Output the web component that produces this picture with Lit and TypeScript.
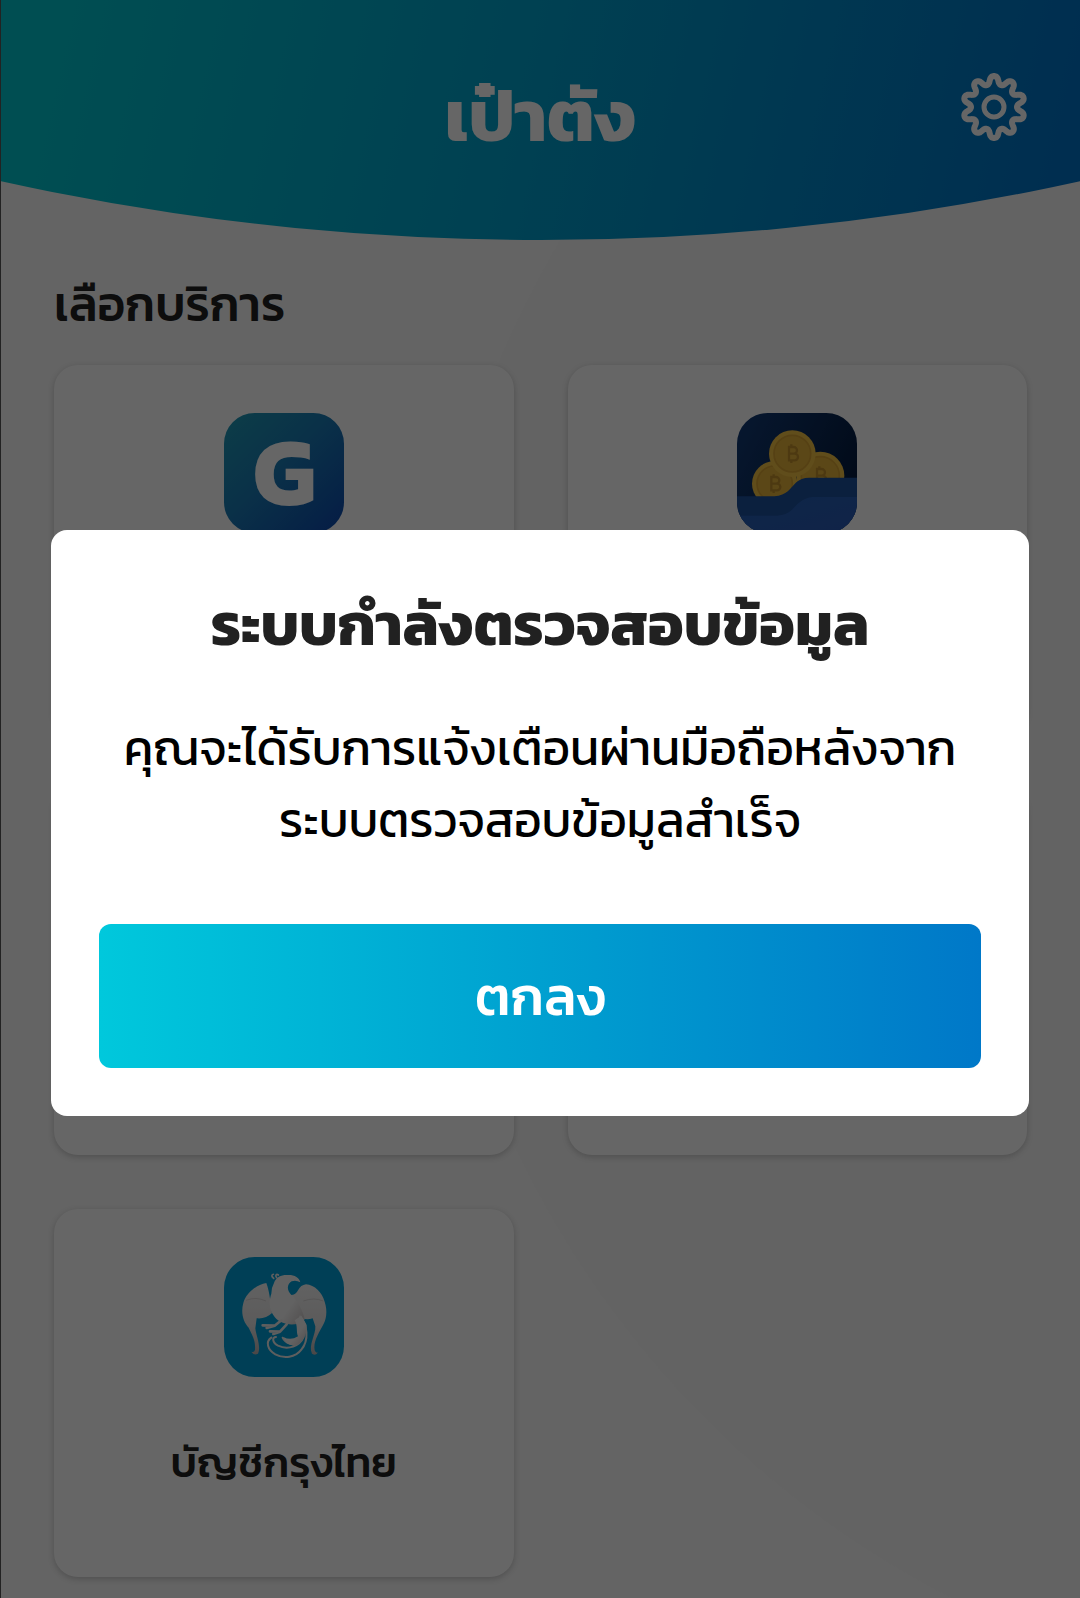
import { LitElement, html, svg, css, nothing, type TemplateResult } from "lit";
import { customElement, property, state } from "lit/decorators.js";

/** Outline of a cog with rounded lobes, centred on 0,0. */
function cogPath(lobes: number, radius: number, depth: number): string {
  const steps = lobes * 24;
  const points: string[] = [];
  for (let i = 0; i < steps; i++) {
    const t = (i / steps) * Math.PI * 2;
    const r = radius + depth * Math.cos(lobes * t);
    const a = t + (0.02 * Math.sin(2 * lobes * t)) - Math.PI / 2;
    points.push(`${(r * Math.cos(a)).toFixed(2)} ${(r * Math.sin(a)).toFixed(2)}`);
  }
  return `M${points.join("L")}Z`;
}

const gearIcon = svg`
  <svg viewBox="-36 -36 72 72" fill="none" stroke="#fff" stroke-linejoin="round" aria-hidden="true">
    <path d=${cogPath(10, 27, 4)} stroke-width="6"></path>
    <circle r="10" stroke-width="5"></circle>
  </svg>`;

const gIcon = svg`
  <svg viewBox="0 0 360 360" aria-hidden="true">
    <defs>
      <linearGradient id="g-bg" x1="0" y1="0" x2="1" y2="1">
        <stop offset="0" stop-color="#1f9ab4"></stop>
        <stop offset=".45" stop-color="#1a7ab4"></stop>
        <stop offset="1" stop-color="#0c46ac"></stop>
      </linearGradient>
    </defs>
    <rect width="360" height="360" rx="92" fill="url(#g-bg)"></rect>
    <text class="mark" x="181" y="275" text-anchor="middle">G</text>
  </svg>`;

const coin = (x: number, y: number, r: number) => svg`
  <g transform="translate(${x} ${y})">
    <circle r=${r} fill="#f0c044"></circle>
    <circle r=${r - 15} fill="#e4b23a" stroke="#d6a233" stroke-width="5"></circle>
    <path d="M-10 -20H4a10 10 0 0 1 0 20H-10ZM-10 0H7a10 10 0 0 1 0 20H-10ZM-3 -28v8M-3 20v8" fill="none" stroke="#c0902c" stroke-width="7"></path>
  </g>`;

const coinsIcon = svg`
  <svg viewBox="0 0 360 360" aria-hidden="true">
    <defs>
      <linearGradient id="c-bg" x1="0" y1="0" x2="1" y2=".5">
        <stop offset="0" stop-color="#123c78"></stop>
        <stop offset="1" stop-color="#051c40"></stop>
      </linearGradient>
      <linearGradient id="c-front" x1="0" y1="0" x2="1" y2="1">
        <stop offset="0" stop-color="#2360b4"></stop>
        <stop offset="1" stop-color="#2a58b4"></stop>
      </linearGradient>
      <clipPath id="c-clip"><rect width="360" height="360" rx="92"></rect></clipPath>
    </defs>
    <g clip-path="url(#c-clip)">
      <rect width="360" height="360" fill="url(#c-bg)"></rect>
      ${coin(113, 212, 68)}
      ${coin(250, 188, 72)}
      ${coin(166, 122, 70)}
      <path d="M0 250H112C150 248 160 225 178 208Q192 194 216 194H360V360H0Z" fill="#1c509c"></path>
      <path d="M0 308H120C160 306 168 284 188 268Q204 254 228 252H360V360H0Z" fill="url(#c-front)"></path>
    </g>
  </svg>`;

const birdIcon = svg`
  <svg viewBox="0 0 360 360" aria-hidden="true">
    <defs>
      <linearGradient id="b-wing" x1="0" y1="0" x2="0" y2="1">
        <stop offset="0" stop-color="#f4f4f4"></stop>
        <stop offset=".6" stop-color="#e4e2e2"></stop>
        <stop offset="1" stop-color="#b9b2b2"></stop>
      </linearGradient>
      <linearGradient id="b-body" x1="0" y1="0" x2="1" y2="1">
        <stop offset=".6" stop-color="#f6f6f6"></stop>
        <stop offset="1" stop-color="#c9c2c2"></stop>
      </linearGradient>
    </defs>
    <rect width="360" height="360" rx="92" fill="#009fd8"></rect>
    <path d="M127 78C96 84 66 108 58 138C50 166 57 194 74 212C86 238 95 250 93 278Q91 287 82 284Q90 297 102 290C112 268 96 236 94 214L98 184C116 186 132 180 144 168C140 144 138 108 127 78Z" fill="url(#b-wing)"></path>
    <path d="M246 82C272 84 294 106 302 134C312 164 306 190 296 206C280 236 268 254 272 280Q276 290 282 286Q276 298 264 290C252 266 276 232 274 208L266 184Q250 190 234 184L200 160L200 114Q216 114 222 100Q230 84 246 82Z" fill="url(#b-wing)"></path>
    <path d="M149 64C142 58 142 54 148 52M158 62C152 54 158 50 163 54" fill="none" stroke="#eee" stroke-width="5" stroke-linecap="round"></path>
    <path d="M150 78C156 58 176 52 194 54C212 54 226 62 229 76Q216 68 203 73C188 82 188 100 202 114C216 126 238 160 242 188C216 212 172 204 152 180C132 154 136 128 142 110Q142 92 150 78Z" fill="url(#b-body)"></path>
    <path d="M66 130Q96 118 126 132M298 132Q270 120 238 132" fill="none" stroke="#d8d4d4" stroke-width="3"></path>
    <path d="M228 178C250 200 256 250 232 278C214 302 180 306 154 292C130 278 124 254 142 242M238 240C228 268 192 280 162 266C144 256 144 240 156 240M176 242C184 260 206 266 226 258" fill="none" stroke="#ececec" stroke-width="6" stroke-linecap="round"></path>
    <path d="M212 190C222 206 216 228 222 238Q200 252 178 240Q182 262 208 266C238 264 250 232 248 204L232 176Z" fill="url(#b-body)"></path>
    <path d="M172 190L152 206L116 205M188 202L168 224L138 223M152 206L128 213M168 224L148 231" fill="none" stroke="#ececec" stroke-width="8" stroke-linecap="round" stroke-linejoin="round"></path>
  </svg>`;

interface Service {
  icon?: TemplateResult<2>;
  label?: string;
}

const services: Service[] = [
  { icon: gIcon },
  { icon: coinsIcon },
  {},
  {},
  { icon: birdIcon, label: "บัญชีกรุงไทย" },
];

@customElement("service-card")
export class ServiceCard extends LitElement {
  @property({ attribute: false }) service: Service = {};

  static styles = css`
    :host {
      display: grid;
    }
    .card {
      box-sizing: border-box;
      min-height: 368px;
      padding: 48px 24px;
      display: flex;
      flex-direction: column;
      align-items: center;
      gap: 56px;
      border-radius: 24px;
      background: #fff;
      box-shadow: 0 2px 6px rgba(0, 0, 0, 0.2);
      color: #212121;
      text-decoration: none;
    }
    .icon {
      width: 120px;
      height: 120px;
    }
    .icon svg {
      display: block;
      width: 100%;
      height: 100%;
      overflow: visible;
    }
    .mark {
      font-family: "Kanit", "Noto Sans Thai", sans-serif;
      font-size: 290px;
      font-weight: 700;
      fill: #fff;
    }
    .label {
      font-size: 42px;
      font-weight: 500;
      line-height: 60px;
      text-align: center;
    }
  `;

  render() {
    const { icon, label } = this.service;
    if (!icon) return html`<div class="card"></div>`;
    return html`
      <a class="card" href="#">
        <span class="icon">${icon}</span>
        ${label ? html`<span class="label">${label}</span>` : nothing}
      </a>
    `;
  }
}

@customElement("app-root")
export class AppRoot extends LitElement {
  @state() private open = true;

  static styles = css`
    :host {
      display: block;
      font-family: "Kanit", "Noto Sans Thai", sans-serif;
    }
    .page {
      box-sizing: border-box;
      min-height: 100vh;
      border-left: 1px solid #555;
      padding-bottom: 18px;
      background: radial-gradient(circle at 1390px 736px, #f7f7f7 966px, #f9f9f9 968px);
    }
    .header {
      box-sizing: border-box;
      height: 240px;
      padding: 62px 50px 0;
      display: grid;
      grid-template-columns: 72px 1fr 72px;
      align-items: start;
      background: linear-gradient(103deg, #00c4cc 4%, #00a0cc 50%, #0074c8 96%);
      clip-path: ellipse(232% 2500px at 50% -2260px);
    }
    .brand {
      grid-column: 2;
      margin: 0;
      color: #fff;
      font-size: 72px;
      font-weight: 700;
      line-height: 108px;
      text-align: center;
    }
    .settings {
      width: 72px;
      height: 72px;
      margin-top: 9px;
      padding: 0;
      border: 0;
      background: none;
    }
    .settings svg {
      display: block;
    }
    .services {
      padding: 34px 53px 0;
    }
    .section-title {
      margin: 0 0 31px;
      color: #212121;
      font-size: 48px;
      font-weight: 500;
      line-height: 60px;
    }
    .grid {
      display: grid;
      grid-template-columns: 1fr 1fr;
      gap: 54px;
    }
    .overlay {
      position: fixed;
      inset: 0;
      box-sizing: border-box;
      display: grid;
      align-items: center;
      padding: 48px 51px 0;
      background: rgba(0, 0, 0, 0.6);
    }
    .dialog {
      display: flex;
      flex-direction: column;
      padding: 48px;
      border-radius: 16px;
      background: #fff;
      text-align: center;
    }
    .dialog-title {
      margin: 0 0 42px;
      color: #212121;
      font-size: 60px;
      font-weight: 700;
      line-height: 92px;
    }
    .dialog-text {
      margin: 0 0 68px;
      color: #000;
      font-size: 48px;
      font-weight: 400;
      line-height: 72px;
    }
    .confirm {
      height: 144px;
      border: 0;
      border-radius: 12px;
      background: linear-gradient(90deg, #00c8dc, #00a0d0 50%, #0078c8);
      color: #fff;
      font: 500 54px/72px "Kanit", "Noto Sans Thai", sans-serif;
    }
  `;

  render() {
    return html`
      <div class="page">
        <header class="header">
          <h1 class="brand">เป๋าตัง</h1>
          <button class="settings" type="button">${gearIcon}</button>
        </header>
        <main class="services">
          <h2 class="section-title">เลือกบริการ</h2>
          <div class="grid">
            ${services.map((s) => html`<service-card .service=${s}></service-card>`)}
          </div>
        </main>
      </div>
      ${this.open
        ? html`
            <div class="overlay">
              <section class="dialog" role="dialog" aria-modal="true" aria-labelledby="title">
                <h2 class="dialog-title" id="title">ระบบกำลังตรวจสอบข้อมูล</h2>
                <p class="dialog-text">
                  คุณจะได้รับการแจ้งเตือนผ่านมือถือหลังจาก<br />ระบบตรวจสอบข้อมูลสำเร็จ
                </p>
                <button class="confirm" type="button" @click=${() => (this.open = false)}>ตกลง</button>
              </section>
            </div>
          `
        : nothing}
    `;
  }
}
